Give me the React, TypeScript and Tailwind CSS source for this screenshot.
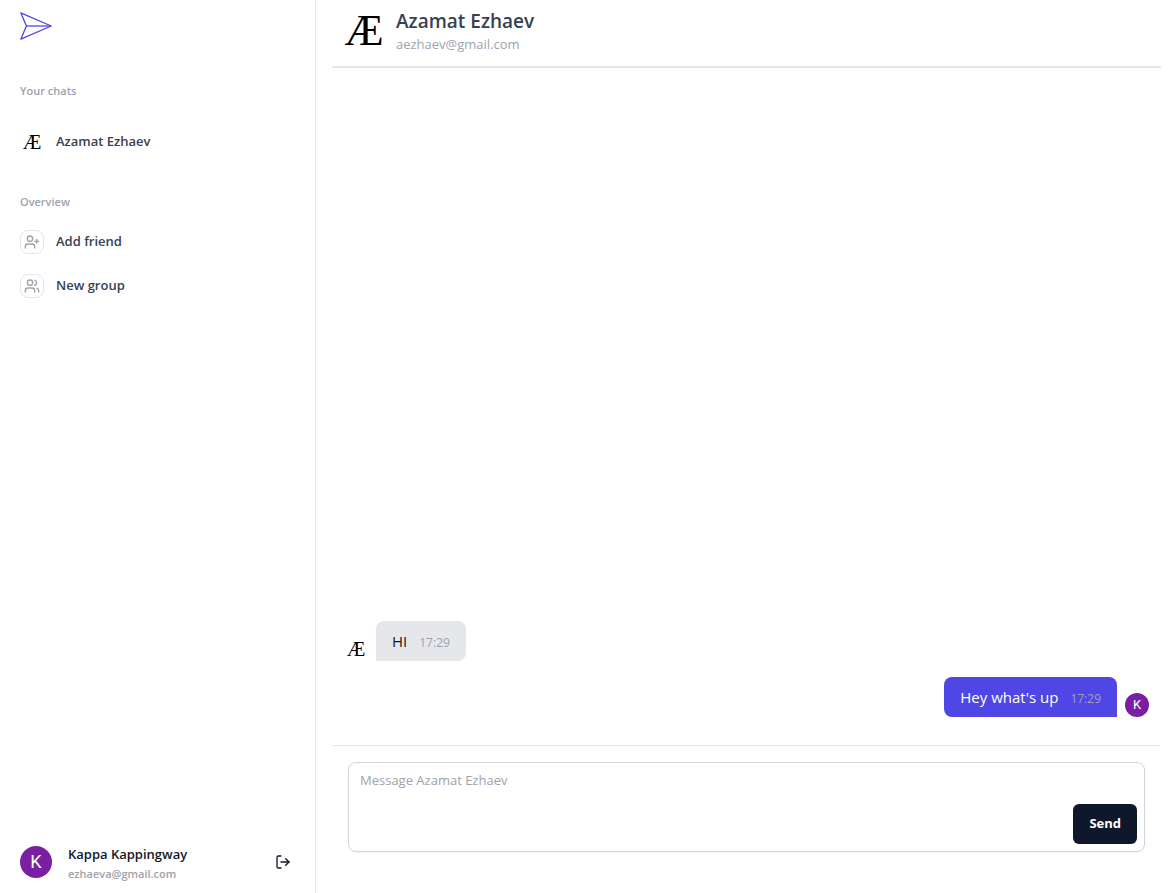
import { LogOut, UserPlus, Users } from 'lucide-react';

function MonogramSmall() {
  return (
    <span className="flex size-6 shrink-0 items-center justify-center font-['Liberation_Serif',serif] text-[21px] leading-6 font-normal text-black">
      Æ
    </span>
  );
}

function Logo() {
  return (
    <svg viewBox="0 0 32 28" className="h-7 w-8 text-[#4f46e5]" fill="none" stroke="currentColor" aria-hidden="true">
      <path d="M.8 .8 31.2 14 .8 27.2 6.4 14Z" strokeWidth="1.3" strokeLinejoin="round" />
      <path d="M6.4 14H31" strokeWidth="1.3" />
    </svg>
  );
}

function Sidebar() {
  return (
    <aside className="flex w-[316px] shrink-0 flex-col border-r border-[#e5e7eb] px-5">
      <a href="#home" aria-label="Home" className="mt-3 self-start">
        <Logo />
      </a>
      <nav className="mt-10 flex flex-1 flex-col font-semibold text-[#374151]">
        <h2 className="text-[11px] leading-[22px] text-[#9ca3af]">Your chats</h2>
        <a href="#chat" className="mt-5 flex h-10 items-center gap-3 text-[13px]">
          <MonogramSmall />
          Azamat Ezhaev
        </a>
        <h2 className="mt-7 text-[11px] leading-6 text-[#9ca3af]">Overview</h2>
        <ul className="mt-2 flex flex-col gap-1 text-[13px]">
          <li>
            <a href="#add" className="flex h-10 items-center gap-3">
              <span className="flex size-6 items-center justify-center rounded-lg border border-[#e5e7eb] text-[#9ca3af]">
                <UserPlus className="size-4" />
              </span>
              Add friend
            </a>
          </li>
          <li>
            <a href="#group" className="flex h-10 items-center gap-3">
              <span className="flex size-6 items-center justify-center rounded-lg border border-[#e5e7eb] text-[#9ca3af]">
                <Users className="size-4" />
              </span>
              New group
            </a>
          </li>
        </ul>
      </nav>
      <div className="mb-[11px] flex items-center">
        <span className="flex size-8 items-center justify-center rounded-full bg-[#7b1fa2] font-[Roboto,sans-serif] text-lg text-white">
          K
        </span>
        <div className="ml-4 flex-1 font-semibold">
          <p className="text-[13px] leading-6 text-[#111827]">Kappa Kappingway</p>
          <p className="text-[11px] leading-4 text-[#a1a1aa]">ezhaeva@gmail.com</p>
        </div>
        <button type="button" aria-label="Sign out" className="p-1 text-[#0f172a]">
          <LogOut className="size-4" />
        </button>
      </div>
    </aside>
  );
}

export default function App() {
  return (
    <div className="flex h-screen bg-white font-['Open_Sans','Noto_Sans',sans-serif]">
      <Sidebar />
      <main className="flex min-w-0 flex-1 flex-col pr-[15px] pl-4">
        <header className="flex items-start gap-2 border-b-2 border-[#e5e7eb] px-2 pt-[9px] pb-[11px]">
          <span className="flex h-11 w-12 items-center justify-center font-['Liberation_Serif',serif] text-[44px] leading-10 text-black">
            Æ
          </span>
          <div>
            <h1 className="text-[19px] leading-6 font-semibold text-[#374151]">Azamat Ezhaev</h1>
            <p className="text-[13px] leading-[22px] text-[#9ca3af]">aezhaev@gmail.com</p>
          </div>
        </header>

        <section aria-label="Messages" className="flex min-h-0 flex-1 flex-col justify-end gap-4 px-3 pb-7">
          <div className="flex items-end gap-2">
            <MonogramSmall />
            <p className="flex items-baseline gap-3 rounded-lg rounded-bl-none bg-[#e5e7eb] px-4 py-2 text-[15px] leading-6 text-[#111827]">
              HI <time className="text-[12px] leading-4 text-[#9ca3af]">17:29</time>
            </p>
          </div>
          <div className="flex items-end justify-end gap-2">
            <p className="flex items-baseline gap-3 rounded-lg rounded-br-none bg-[#4f46e5] px-4 py-2 text-[15px] leading-6 text-white">
              Hey what's up <time className="text-[12px] leading-4 text-[#9ca3af]">17:29</time>
            </p>
            <span className="flex size-6 items-center justify-center rounded-full bg-[#7b1fa2] font-[Roboto,sans-serif] text-[13px] text-white">
              K
            </span>
          </div>
        </section>

        <form className="border-t border-[#e5e7eb] px-4 pt-4 pb-[41px]">
          <div className="flex h-[90px] items-end rounded-lg border border-[#d1d5db] pr-[7px] pb-[7px] shadow-xs">
            <textarea
              aria-label="Message"
              placeholder="Message Azamat Ezhaev"
              className="h-full flex-1 resize-none bg-transparent px-[11px] pt-[5px] text-[13px] leading-6 text-[#111827] outline-none placeholder:text-[#9ca3af]"
            />
            <button type="submit" className="h-10 rounded-md bg-[#0f172a] px-4 text-[13px] font-bold text-white">
              Send
            </button>
          </div>
        </form>
      </main>
    </div>
  );
}
